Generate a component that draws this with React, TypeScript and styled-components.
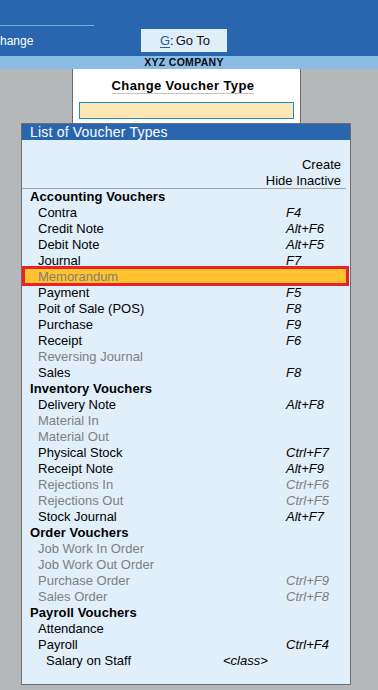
import React from "react";
import styled, { createGlobalStyle } from "styled-components";

const Global = createGlobalStyle`
  html, body { margin: 0; padding: 0; }
  body {
    width: 378px;
    height: 690px;
    overflow: hidden;
    background: #b5b8bb;
    font-family: "Liberation Sans", Arial, sans-serif;
  }
`;

const Screen = styled.div`
  width: 378px;
  height: 690px;
  display: flex;
  flex-direction: column;
  background: #b5b8bb;
  overflow: hidden;
`;

const TopBar = styled.div`
  height: 56px;
  background: #2a66b0;
  display: flex;
  flex-direction: column;
`;

const TopStrip = styled.div`
  height: 27px;
  display: flex;
  align-items: flex-end;
`;

const TopRule = styled.div`
  width: 94px;
  height: 1px;
  background: #7ea8d9;
  margin-bottom: 1px;
`;

const TopRow = styled.div`
  flex: 1;
  display: grid;
  grid-template-columns: 1fr auto 1fr;
  align-items: start;
  padding-right: 10px;
`;

const ModeLabel = styled.span`
  color: #ffffff;
  font-size: 12px;
  line-height: 14px;
  margin-top: 7px;
  justify-self: start;
`;

const GoToButton = styled.div`
  width: 86px;
  height: 23px;
  margin-top: 2px;
  background: #e0eefa;
  display: flex;
  align-items: center;
  justify-content: center;
  font-size: 13px;
  color: #111;
  padding-left: 2px;
  box-sizing: border-box;
`;

const KeyLetter = styled.span`
  color: #2d5a98;
  text-decoration: underline;
  text-underline-offset: 2px;
`;

const Colon = styled.span`
  margin-right: 2px;
`;

const CompanyBand = styled.div`
  height: 13px;
  background: #8abce6;
  display: flex;
  align-items: center;
  justify-content: center;
  padding-right: 10px;
  font-size: 10.5px;
  letter-spacing: 0.3px;
  font-weight: bold;
  color: #0b0b14;
  line-height: 13px;
`;

const Workspace = styled.div`
  flex: 1;
  display: flex;
  flex-direction: column;
  align-items: center;
  padding-right: 6px;
`;

const TypePanel = styled.div`
  width: 229px;
  height: 54px;
  box-sizing: border-box;
  background: #ffffff;
  border-left: 1px solid #6b6b6b;
  border-right: 1px solid #6b6b6b;
  display: flex;
  flex-direction: column;
  align-items: center;
  padding-top: 9px;
`;

const TypeTitle = styled.div`
  font-size: 13px;
  letter-spacing: 0.4px;
  font-weight: bold;
  line-height: 15px;
  color: #000;
  border-bottom: 1px solid #c4c4c4;
  margin-right: 6px;
`;

const TypeInput = styled.div`
  width: 215px;
  height: 17px;
  box-sizing: border-box;
  margin-top: 8px;
  background: #fde7b4;
  border: 1px solid #1e8ad0;
`;

const ListPanel = styled.div`
  width: 330px;
  height: 562px;
  box-sizing: border-box;
  border: 1px solid #6e6e6e;
  background: #e1effa;
  display: flex;
  flex-direction: column;
`;

const ListHeader = styled.div`
  height: 16px;
  background: #2a66b0;
  color: #ffffff;
  font-size: 14px;
  letter-spacing: 0.2px;
  line-height: 16px;
  padding-left: 8px;
`;

const ListBody = styled.div`
  display: flex;
  flex-direction: column;
  padding-top: 17px;
  font-size: 13px;
  line-height: 16px;
`;

const Options = styled.div`
  height: 31px;
  margin-right: 4px;
  display: flex;
  flex-direction: column;
  align-items: flex-end;
  padding-right: 5px;
  border-bottom: 1px solid #a3a3a3;
`;

const OptionText = styled.span`
  color: #000;
`;

const Row = styled.div<{ $highlight?: boolean }>`
  position: relative;
  isolation: isolate;
  display: grid;
  grid-template-columns: 201px 1fr 64px;
  height: 16px;
  white-space: nowrap;
  ${(p) =>
    p.$highlight &&
    `
    &::before {
      content: "";
      position: absolute;
      top: -3px;
      bottom: -1px;
      left: 0;
      right: 1px;
      border: 3px solid #e8212b;
      background: #fec32f;
      z-index: -1;
    }
  `}
`;

const Name = styled.span<{ $level: number; $dim?: boolean; $group?: boolean }>`
  padding-left: ${(p) => 8 + p.$level * 8}px;
  color: ${(p) => (p.$dim ? "#808080" : "#000")};
  font-weight: ${(p) => (p.$group ? "bold" : "normal")};
  letter-spacing: ${(p) => (p.$group ? "0.1px" : "0")};
`;

const ClassTag = styled.span`
  font-style: italic;
  color: #000;
`;

const Key = styled.span<{ $dim?: boolean }>`
  font-style: italic;
  color: ${(p) => (p.$dim ? "#808080" : "#000")};
`;

type Item = {
  name: string;
  level: number;
  key?: string;
  dim?: boolean;
  group?: boolean;
  highlight?: boolean;
  cls?: string;
};

const items: Item[] = [
  { name: "Accounting Vouchers", level: 0, group: true },
  { name: "Contra", level: 1, key: "F4" },
  { name: "Credit Note", level: 1, key: "Alt+F6" },
  { name: "Debit Note", level: 1, key: "Alt+F5" },
  { name: "Journal", level: 1, key: "F7" },
  { name: "Memorandum", level: 1, dim: true, highlight: true },
  { name: "Payment", level: 1, key: "F5" },
  { name: "Poit of Sale (POS)", level: 1, key: "F8" },
  { name: "Purchase", level: 1, key: "F9" },
  { name: "Receipt", level: 1, key: "F6" },
  { name: "Reversing Journal", level: 1, dim: true },
  { name: "Sales", level: 1, key: "F8" },
  { name: "Inventory Vouchers", level: 0, group: true },
  { name: "Delivery Note", level: 1, key: "Alt+F8" },
  { name: "Material In", level: 1, dim: true },
  { name: "Material Out", level: 1, dim: true },
  { name: "Physical Stock", level: 1, key: "Ctrl+F7" },
  { name: "Receipt Note", level: 1, key: "Alt+F9" },
  { name: "Rejections In", level: 1, key: "Ctrl+F6", dim: true },
  { name: "Rejections Out", level: 1, key: "Ctrl+F5", dim: true },
  { name: "Stock Journal", level: 1, key: "Alt+F7" },
  { name: "Order Vouchers", level: 0, group: true },
  { name: "Job Work In Order", level: 1, dim: true },
  { name: "Job Work Out Order", level: 1, dim: true },
  { name: "Purchase Order", level: 1, key: "Ctrl+F9", dim: true },
  { name: "Sales Order", level: 1, key: "Ctrl+F8", dim: true },
  { name: "Payroll Vouchers", level: 0, group: true },
  { name: "Attendance", level: 1 },
  { name: "Payroll", level: 1, key: "Ctrl+F4" },
  { name: "Salary on Staff", level: 2, cls: "<class>" },
];

export default function App() {
  return (
    <>
      <Global />
      <Screen>
        <TopBar>
          <TopStrip>
            <TopRule />
          </TopStrip>
          <TopRow>
            <ModeLabel>hange</ModeLabel>
            <GoToButton>
              <KeyLetter>G</KeyLetter>
              <Colon>:</Colon>
              Go To
            </GoToButton>
            <span />
          </TopRow>
        </TopBar>
        <CompanyBand>XYZ COMPANY</CompanyBand>
        <Workspace>
          <TypePanel>
            <TypeTitle>Change Voucher Type</TypeTitle>
            <TypeInput />
          </TypePanel>
          <ListPanel>
            <ListHeader>List of Voucher Types</ListHeader>
            <ListBody>
              <Options>
                <OptionText>Create</OptionText>
                <OptionText>Hide Inactive</OptionText>
              </Options>
              {items.map((it) => (
                <Row key={it.name} $highlight={it.highlight}>
                  <Name $level={it.level} $dim={it.dim} $group={it.group}>
                    {it.name}
                  </Name>
                  <ClassTag>{it.cls ?? ""}</ClassTag>
                  <Key $dim={it.dim}>{it.key ?? ""}</Key>
                </Row>
              ))}
            </ListBody>
          </ListPanel>
        </Workspace>
      </Screen>
    </>
  );
}
